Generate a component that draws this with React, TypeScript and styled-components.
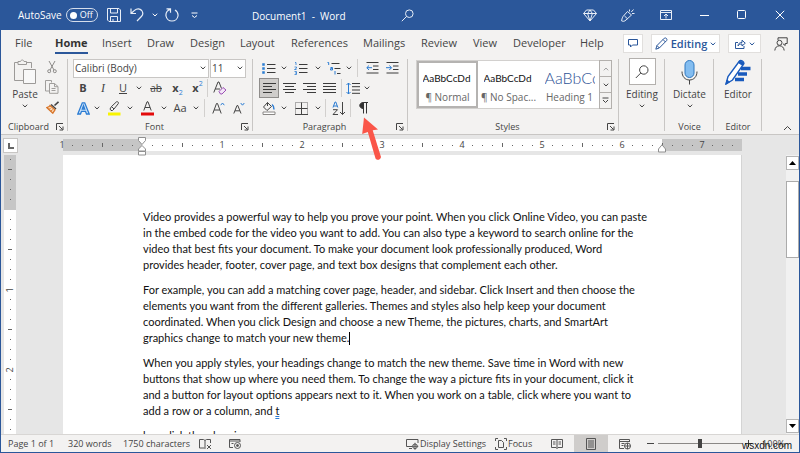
import React from "react";
import styled, { createGlobalStyle, css } from "styled-components";

const ui = '"Open Sans", "Noto Sans", sans-serif';
const blue = "#2b579a";
const ink = "#444444";
const chrome = "#f3f2f1";

const Global = createGlobalStyle`
  *, *::before, *::after { box-sizing: border-box; }
  html, body { margin: 0; height: 100%; overflow: hidden; }
  body { font-family: ${ui}; color: ${ink}; background: ${chrome}; }
  button, select, input { font: inherit; color: inherit; margin: 0; padding: 0; border: 0; background: none; border-radius: 0; }
  svg { display: block; flex: none; }
`;

const Window = styled.div`
  display: flex;
  flex-direction: column;
  height: 100vh;
  border: solid ${blue};
  border-width: 0 1px 1px;
  background: ${chrome};
`;

/* ---------- title bar ---------- */

const TitleBar = styled.header`
  flex: none;
  display: flex;
  align-items: center;
  height: 30px;
  padding-left: 17px;
  background: ${blue};
  color: #ffffff;
  font-size: 10px;
  white-space: nowrap;
`;

const AutoSave = styled.label`
  display: flex;
  align-items: center;
  gap: 4px;
  width: 87px;
  margin-right: 2px;
`;

const Toggle = styled.button`
  display: flex;
  align-items: center;
  justify-content: space-between;
  width: 32px;
  height: 14px;
  padding: 0 4px 0 3px;
  border: 1px solid #d5deec;
  border-radius: 7px;
  font-size: 9px;
  line-height: 12px;
`;

const Knob = styled.span`
  width: 7px;
  height: 7px;
  border-radius: 50%;
  background: #ffffff;
`;

const TitleButton = styled.button<{ $w: number }>`
  display: flex;
  align-items: center;
  justify-content: center;
  width: ${(p) => p.$w}px;
  height: 30px;
`;

const DocTitle = styled.div`
  width: 134px;
  margin-left: 50px;
  padding-top: 2px;
  white-space: pre;
`;

const Spacer = styled.div`
  flex: 1;
`;

/* ---------- tab strip ---------- */

const TabStrip = styled.nav`
  flex: none;
  display: flex;
  align-items: center;
  height: 27px;
  padding: 0 6px 0 14px;
  font-size: 11px;
`;

const Tab = styled.button<{ $active?: boolean; $w: number }>`
  width: ${(p) => p.$w}px;
  height: 24px;
  text-align: left;
  white-space: nowrap;
  ${(p) =>
    p.$active &&
    css`
      font-weight: 700;
      color: #333333;
    `}
`;

const TabText = styled.span<{ $active?: boolean }>`
  display: inline-block;
  height: 21px;
  line-height: 20px;
  border-bottom: 2px solid ${(p) => (p.$active ? blue : "transparent")};
`;

const Pill = styled.button<{ $w: number }>`
  display: flex;
  align-items: center;
  justify-content: center;
  gap: 3px;
  width: ${(p) => p.$w}px;
  height: 19px;
  margin-right: 8px;
  border: 1px solid #e1dfdd;
  background: #ffffff;
  color: ${blue};
  font-weight: 600;
  font-size: 11px;
  white-space: nowrap;
`;

/* ---------- ribbon ---------- */

const Ribbon = styled.section`
  flex: none;
  display: flex;
  height: 78px;
  border-bottom: 1px solid #c8c6c4;
`;

const Group = styled.div<{ $w: number }>`
  position: relative;
  display: flex;
  flex-direction: column;
  flex: none;
  width: ${(p) => p.$w}px;
  padding-top: 1px;
  background: linear-gradient(#c8c6c4, #c8c6c4) right 2px / 1px 72px no-repeat;
`;

const GroupBody = styled.div<{ $pad?: number }>`
  height: 63px;
  padding-left: ${(p) => p.$pad ?? 0}px;
`;

const GroupFoot = styled.div`
  display: flex;
  align-items: center;
  height: 14px;
  font-size: 9px;
  line-height: 14px;
  white-space: nowrap;
`;

const GroupName = styled.span`
  flex: 1;
  min-width: 0;
  text-align: center;
`;

const Launcher = styled.button`
  margin-right: 4px;
`;

const Row = styled.div`
  display: flex;
  align-items: center;
  height: 20px;
`;

const Tool = styled.button<{ $w: number; $on?: boolean }>`
  display: flex;
  align-items: center;
  justify-content: center;
  width: ${(p) => p.$w}px;
  height: ${(p) => (p.$on ? 20 : 18)}px;
  font-size: 11px;
  line-height: 18px;
  ${(p) =>
    p.$on &&
    css`
      background: #cfcdcb;
      border: 1px solid #8f8d8b;
    `}
`;

const Glyph = styled.span<{ $bold?: boolean; $italic?: boolean; $line?: string; $size?: number }>`
  font-weight: ${(p) => (p.$bold ? 700 : 400)};
  font-style: ${(p) => (p.$italic ? "italic" : "normal")};
  font-family: ${(p) => (p.$italic ? '"Liberation Serif", serif' : "inherit")};
  text-decoration: ${(p) => p.$line ?? "none"};
  font-size: ${(p) => p.$size ?? 11}px;
`;

const Script = styled.span<{ $up?: boolean }>`
  align-self: ${(p) => (p.$up ? "flex-start" : "flex-end")};
  font-size: 7px;
  line-height: 9px;
  color: #2b7cd3;
`;

const Sep = styled.span<{ $gap?: number }>`
  width: 1px;
  height: 18px;
  margin: 0 ${(p) => p.$gap ?? 0}px;
  background: #d2d0ce;
`;

const Combo = styled.label<{ $w: number }>`
  display: grid;
  align-items: center;
  width: ${(p) => p.$w}px;
  height: 19px;
  margin-right: 1px;
  border: 1px solid #c8c6c4;
  background: #ffffff;
  > * {
    grid-area: 1 / 1;
  }
  > svg {
    justify-self: end;
    margin-right: 2px;
    pointer-events: none;
  }
`;

const Select = styled.select`
  appearance: none;
  width: 100%;
  height: 17px;
  padding-left: 1px;
  font-size: 10px;
  outline: none;
`;

const ClipRow = styled.div`
  display: flex;
  height: 63px;
  padding-left: 6px;
`;

const BigButton = styled.button<{ $w?: number }>`
  display: flex;
  flex-direction: column;
  align-items: center;
  width: ${(p) => (p.$w ? p.$w + "px" : "100%")};
  height: 56px;
  font-size: 10px;
  line-height: 16px;
  > svg {
    margin-top: 2px;
  }
`;

const BigIcon = styled.span<{ $boxed?: boolean }>`
  display: flex;
  align-items: center;
  justify-content: center;
  width: 27px;
  height: 27px;
  margin-bottom: 1px;
  ${(p) =>
    p.$boxed &&
    css`
      border: 1px solid #b3b0ad;
      background: #ffffff;
    `}
`;

const Stack = styled.div`
  display: flex;
  flex-direction: column;
  gap: 2px;
`;

const Gallery = styled.div`
  display: flex;
  height: 49px;
  margin-top: 2px;
  margin-right: 7px;
  border: 1px solid #d2d0ce;
  background: #ffffff;
`;

const StyleCard = styled.button<{ $on?: boolean }>`
  flex: 1;
  min-width: 0;
  display: flex;
  flex-direction: column;
  align-items: center;
  justify-content: space-between;
  padding: 6px 2px 2px;
  overflow: hidden;
  border: 2px solid ${(p) => (p.$on ? "#b5b3b1" : "transparent")};
  font-size: 10px;
  line-height: 14px;
  white-space: nowrap;
  color: #666666;
`;

const Sample = styled.span<{ $heading?: boolean }>`
  width: 50px;
  overflow: hidden;
  text-align: left;
  font-family: Lato, sans-serif;
  font-size: ${(p) => (p.$heading ? 16 : 10)}px;
  line-height: 18px;
  font-weight: ${(p) => (p.$heading ? 300 : 400)};
  color: ${(p) => (p.$heading ? "#2f5496" : "#111111")};
`;

const Scroller = styled.div`
  display: flex;
  flex-direction: column;
  width: 13px;
  margin: -1px;
`;

const ScrollStep = styled.button`
  flex: 1;
  display: flex;
  align-items: center;
  justify-content: center;
  border: 1px solid #b3b0ad;
  background: ${chrome};
  & + & {
    border-top: 0;
  }
`;

const Collapse = styled.button`
  align-self: flex-end;
  margin: 0 7px 3px auto;
`;

const Pointer = styled.svg`
  position: absolute;
  z-index: 2;
  left: 108px;
  top: 60px;
  pointer-events: none;
`;

/* ---------- workspace ---------- */

const Workspace = styled.main`
  flex: 1;
  min-height: 0;
  display: grid;
  grid-template-columns: 55px minmax(0, 1fr) 13px;
  grid-template-rows: 20px minmax(0, 1fr);
  background: #e6e6e6;
`;

const TabSelector = styled.button`
  width: 15px;
  height: 15px;
  margin: 3px 0 0 2px;
  display: flex;
  align-items: center;
  justify-content: center;
  border: 1px solid #c8c6c4;
  background: #ffffff;
`;

const Ruler = styled.div`
  position: relative;
  grid-column: 2 / 4;
  display: flex;
  width: 686px;
  height: 12px;
  margin-top: 4px;
  padding-left: 1px;
  background: linear-gradient(to right, transparent 7px, #c6c6c6 7px 86px, #ffffff 86px 606px, #c6c6c6 606px);
`;

const Cell = styled.span<{ $vertical?: boolean }>`
  flex: none;
  width: ${(p) => (p.$vertical ? 12 : 10)}px;
  height: ${(p) => (p.$vertical ? 10 : 12)}px;
  display: flex;
  align-items: center;
  justify-content: center;
  font-size: 9px;
  line-height: 12px;
  ${(p) => p.$vertical && "transform: rotate(-90deg);"}
`;

const Tick = styled.i<{ $long?: boolean }>`
  width: 1px;
  height: ${(p) => (p.$long ? 4 : 1)}px;
  background: #666666;
`;

const Indent = styled.svg<{ $x: number; $y: number }>`
  position: absolute;
  left: ${(p) => p.$x}px;
  top: ${(p) => p.$y}px;
`;

const SideRuler = styled.div`
  width: 12px;
  height: 100%;
  margin-left: 3px;
  overflow: hidden;
  background: linear-gradient(#c6c6c6 55px, #ffffff 55px);
`;

const Page = styled.article`
  margin: 0 44px 0 7px;
  padding: 54px 0 0 80px;
  overflow: hidden;
  background: #ffffff;
  border-right: 1px solid #d4d4d4;
  font-family: Lato, sans-serif;
  font-size: 11px;
  line-height: 16px;
  color: #111111;
`;

const Paragraph = styled.p`
  margin: 0 0 9px;
  white-space: nowrap;
`;

const Caret = styled.span`
  display: inline-block;
  width: 1px;
  height: 13px;
  vertical-align: -3px;
  background: #000000;
`;

const Flagged = styled.u`
  text-decoration: underline double #2b7cd3;
`;

const ScrollBar = styled.div`
  display: flex;
  flex-direction: column;
  padding: 1px 0;
  background: #f1f1f1;
`;

const ScrollArrow = styled.button`
  display: flex;
  align-items: center;
  justify-content: center;
  height: 14px;
  border: 1px solid #b5b5b5;
  background: #ffffff;
`;

const Thumb = styled.div`
  height: 77px;
  margin: 11px 0 auto;
  border: 1px solid #ababab;
  background: #ffffff;
`;

/* ---------- status bar ---------- */

const StatusBar = styled.footer`
  position: relative;
  flex: none;
  display: flex;
  align-items: center;
  height: 18px;
  padding: 0 14px 0 7px;
  border-top: 1px solid #d8d6d4;
  font-size: 9px;
  white-space: nowrap;
`;

const StatusButton = styled.button<{ $w: number; $centered?: boolean; $on?: boolean }>`
  display: flex;
  align-items: center;
  justify-content: ${(p) => (p.$centered ? "center" : "flex-start")};
  gap: 1px;
  width: ${(p) => p.$w}px;
  height: 17px;
  background: ${(p) => (p.$on ? "#cfcdcb" : "transparent")};
`;

const Zoom = styled.input`
  appearance: none;
  width: 84px;
  height: 12px;
  background: linear-gradient(#8a8886, #8a8886) center / 100% 1px no-repeat;
  &::-webkit-slider-thumb {
    appearance: none;
    width: 4px;
    height: 9px;
    background: #444444;
  }
`;

const ZoomValue = styled.span`
  width: 31px;
  text-align: right;
`;

const Watermark = styled.span`
  position: absolute;
  right: 7px;
  top: 4px;
  font-family: "Liberation Sans", Arial, sans-serif;
  font-size: 10px;
  line-height: 13px;
  color: #111111;
`;

/* ---------- drawings ---------- */

type IcoProps = { w: number; h: number; c?: string; s?: number; children: React.ReactNode };
const Ico = ({ w, h, c = ink, s = 1, children }: IcoProps) => (
  <svg width={w} height={h} viewBox={`0 0 ${w} ${h}`} fill="none" stroke={c} strokeWidth={s} aria-hidden="true">
    {children}
  </svg>
);

const Chevron = ({ up, c }: { up?: boolean; c?: string }) => (
  <Ico w={6} h={4} c={c}>
    <path d={up ? "M.8 3.300 3 1l2.200 2.300" : "M.8.7 3 3 5.200.7"} />
  </Ico>
);

const Drop = ({ w = 10, name }: { w?: number; name: string }) => (
  <Tool $w={w} aria-label={name}>
    <Chevron />
  </Tool>
);

const LaunchIcon = () => (
  <Ico w={8} h={8}>
    <path d="M.5 7V.5H7M3 3l3.500 3.500M7 3.500V7H3.500" />
  </Ico>
);

const Foot = ({ name, launch }: { name: string; launch?: boolean }) => (
  <GroupFoot>
    <GroupName>{name}</GroupName>
    {launch && (
      <Launcher aria-label={name + " settings"}>
        <LaunchIcon />
      </Launcher>
    )}
  </GroupFoot>
);

const AlignIcon = ({ lines }: { lines: [number, number][] }) => (
  <Ico w={13} h={12} c="#3b3b3b">
    {lines.map(([a, b], i) => (
      <path key={i} d={`M${a} ${1.5 + i * 3}H${b}`} />
    ))}
  </Ico>
);

const RulerCells = ({ count, zero, vertical }: { count: number; zero: number; vertical?: boolean }) => (
  <>
    {Array.from({ length: count }, (_, i) => {
      const d = Math.abs(i - zero);
      return (
        <Cell key={i} $vertical={vertical}>
          {d === 0 ? null : d % 8 === 0 ? d / 8 : <Tick $long={d % 4 === 0} />}
        </Cell>
      );
    })}
  </>
);

/* ---------- content ---------- */

const tabs: [string, number][] = [
  ["File", 40],
  ["Home", 47],
  ["Insert", 45],
  ["Draw", 43],
  ["Design", 50],
  ["Layout", 51],
  ["References", 72],
  ["Mailings", 58],
  ["Review", 52],
  ["View", 40],
  ["Developer", 67],
  ["Help", 30],
];

const paragraphs = [
  [
    "Video provides a powerful way to help you prove your point. When you click Online Video, you can paste",
    "in the embed code for the video you want to add. You can also type a keyword to search online for the",
    "video that best fits your document. To make your document look professionally produced, Word",
    "provides header, footer, cover page, and text box designs that complement each other.",
  ],
  [
    "For example, you can add a matching cover page, header, and sidebar. Click Insert and then choose the",
    "elements you want from the different galleries. Themes and styles also help keep your document",
    "coordinated. When you click Design and choose a new Theme, the pictures, charts, and SmartArt",
    "graphics change to match your new theme.",
  ],
  [
    "When you apply styles, your headings change to match the new theme. Save time in Word with new",
    "buttons that show up where you need them. To change the way a picture fits in your document, click it",
    "and a button for layout options appears next to it. When you work on a table, click where you want to",
    "add a row or a column, and ",
  ],
  ["hen click the plus sign."],
];

export default function App() {
  return (
    <Window>
      <Global />
      <TitleBar>
        <AutoSave>
          AutoSave
          <Toggle role="switch" aria-checked="false">
            <Knob />
            Off
          </Toggle>
        </AutoSave>
        <TitleButton $w={14} aria-label="Save">
          <Ico w={14} h={14} c="#e8eef7">
            <path d="M.5.5h11.500l1.500 1.500v11.500H2L.5 12zM3.500.5v4.500h7V.5M3.500 13.500V8.500h7v5M6 13.500V11" />
          </Ico>
        </TitleButton>
        <TitleButton $w={31} aria-label="Undo">
          <Ico w={14} h={14} c="#e8eef7" s={1.2}>
            <path d="M1 .5v5h5M1.300 5.300 4.500 2.400C7 .2 10 .5 11.700 2.500c1.500 2 1.300 4.300-.3 6L7 13" />
          </Ico>
        </TitleButton>
        <TitleButton $w={6} aria-label="Undo list">
          <Chevron c="#ffffff" />
        </TitleButton>
        <TitleButton $w={28} aria-label="Redo">
          <Ico w={14} h={14} c="#e8eef7" s={1.2}>
            <path d="M1.500.8h4v4M5.300 1.200C2 2.500.6 5 1 8c.6 3 3 5 6 5s5.500-2.300 6-5c.3-2.600-.8-4.700-3-6" />
          </Ico>
        </TitleButton>
        <TitleButton $w={16} aria-label="Customize toolbar">
          <Ico w={7} h={7} c="#ffffff">
            <path d="M.5 1h6M1 3.500l2.500 2L6 3.500" />
          </Ico>
        </TitleButton>
        <DocTitle>Document1  -  Word</DocTitle>
        <TitleButton $w={42} aria-label="Search">
          <Ico w={13} h={13} c="#e8eef7">
            <circle cx="8.300" cy="4.700" r="3.800" />
            <path d="M5.600 7.400.8 12.200" />
          </Ico>
        </TitleButton>
        <Spacer />
        <TitleButton $w={38} aria-label="Premium">
          <Ico w={14} h={13} c="#e8eef7">
            <path d="M3.500 1h7l3 3.500-6.500 7.500L.6 4.500zM.6 4.500h12.900M4.600 4.500 7 12l2.400-7.500L7 1 4.600 4.500" />
          </Ico>
        </TitleButton>
        <TitleButton $w={38} aria-label="Coming soon">
          <Ico w={14} h={14} c="#e8eef7">
            <path d="M6.500 3.500 10.500 7l-5.500 5c-1.500 1.500-3 1.500-4.300 1 0-1.500.3-2.500 1.300-4.500zM3.500 8l3 2.800M8.500 1.500v2M12.500 1.500 10.300 4M11 5.500h2.500" />
          </Ico>
        </TitleButton>
        <TitleButton $w={38} aria-label="Ribbon display options">
          <Ico w={12} h={10} c="#e8eef7">
            <path d="M.5.5h11v9H.5zM.5 2.500h11M6 8.500v-4M4 6l2-2 2 2" />
          </Ico>
        </TitleButton>
        <TitleButton $w={38} aria-label="Minimize">
          <Ico w={9} h={9} c="#ffffff">
            <path d="M0 4.500h9" />
          </Ico>
        </TitleButton>
        <TitleButton $w={38} aria-label="Maximize">
          <Ico w={10} h={10} c="#ffffff">
            <rect x=".5" y=".5" width="8" height="8" rx="1" />
          </Ico>
        </TitleButton>
        <TitleButton $w={38} aria-label="Close">
          <Ico w={10} h={10} c="#ffffff">
            <path d="m.8.8 8.400 8.400M9.200.8.8 9.200" />
          </Ico>
        </TitleButton>
      </TitleBar>

      <TabStrip>
        {tabs.map(([t, w]) => (
          <Tab key={t} $w={w} $active={t === "Home"}>
            <TabText $active={t === "Home"}>{t}</TabText>
          </Tab>
        ))}
        <Spacer />
        <Pill $w={20} aria-label="Comments">
          <Ico w={10} h={9} c={blue}>
            <path d="M.5.5h9v5.500H4.500L2.500 8V6h-2z" />
          </Ico>
        </Pill>
        <Pill $w={69}>
          <Ico w={13} h={13} c={blue}>
            <path d="M.8 12.200 2 8.500 9.300 1.200c1.500-1 3.300.8 2.400 2.300L4.300 11zM8 2.500 10.500 5M2 8.500 4.300 11" />
          </Ico>
          Editing
          <Chevron c={blue} />
        </Pill>
        <Pill $w={33} aria-label="Share">
          <Ico w={11} h={10} c={blue}>
            <path d="M3 3.500H.5v6h8.500V7M3 7c.2-2.500 1.500-3.500 4-3.500V1.200l3.300 3L7 7V5C5 5 4 5.500 3 7z" />
          </Ico>
          <Chevron c={blue} />
        </Pill>
        <TitleButton $w={24} aria-label="Account manager">
          <Ico w={14} h={14}>
            <path d="M4 3V.8h9.200V6.500h-2v2L9 6.800" />
            <circle cx="5.500" cy="5.800" r="2.500" />
            <path d="M.8 13.500c.3-3 2-4.700 4.700-4.700s4.300 1.700 4.700 4.700" />
          </Ico>
        </TitleButton>
      </TabStrip>

      <Ribbon>
        <Group $w={67}>
          <ClipRow>
            <BigButton $w={36}>
              <BigIcon>
                <Ico w={24} h={26} c="#9c9a98">
                  <path d="M5 3.500H1.500v18H11M13 3.500h5.500V9M5 5.500v-3h2.500C8 .5 10.500.5 11 2.500h2.500v3z" />
                  <path d="M10.500 10.500h12v14h-12z" fill="#f8f8f8" />
                </Ico>
              </BigIcon>
              Paste
              <Chevron />
            </BigButton>
            <Stack>
              <Tool $w={18} aria-label="Cut">
                <Ico w={10} h={14} c="#8c8a88">
                  <path d="M2 1l5 9M8 1l-5 9" />
                  <circle cx="2.200" cy="11.200" r="1.500" />
                  <circle cx="7.800" cy="11.200" r="1.500" />
                </Ico>
              </Tool>
              <Tool $w={18} aria-label="Copy">
                <Ico w={14} h={14} c="#a09e9c">
                  <path d="M4.500 11h-4V.5h6v2M4.500 3.500h5l3.500 3v6.800H4.500zM9.500 3.500v3.200H13M6.500 8.500h4M6.500 10.500h4" />
                </Ico>
              </Tool>
              <Tool $w={18} aria-label="Format painter">
                <Ico w={13} h={13}>
                  <path d="M12.500.8 8.500 4.500" strokeWidth="1.600" />
                  <path d="m5 3.500 5 4.500" strokeWidth="1.500" />
                  <path d="M4 4.500C3 6 1.500 6.200.8 6.500l6 5.700L9 8.800z" fill="#fbd9b5" stroke="#d8752a" strokeWidth="1.300" />
                  <path d="M3 8.500 4.500 7M5 10.300 6.500 8.500" stroke="#d8752a" />
                </Ico>
              </Tool>
            </Stack>
          </ClipRow>
          <Foot name="Clipboard" launch />
        </Group>

        <Group $w={185}>
          <GroupBody $pad={5}>
            <Row>
              <Combo $w={136}>
                <Select aria-label="Font" defaultValue="Calibri (Body)">
                  <option>Calibri (Body)</option>
                </Select>
                <Chevron />
              </Combo>
              <Combo $w={36}>
                <Select aria-label="Font size" defaultValue="11">
                  <option>11</option>
                </Select>
                <Chevron />
              </Combo>
            </Row>
            <Row>
              <Tool $w={20} aria-label="Bold"><Glyph $bold>B</Glyph></Tool>
              <Tool $w={20} aria-label="Italic"><Glyph $italic $size={12}>I</Glyph></Tool>
              <Tool $w={20} aria-label="Underline"><Glyph $line="underline">U</Glyph></Tool>
              <Drop name="Underline style" w={12} />
              <Tool $w={22} aria-label="Strikethrough"><Glyph $line="line-through" $size={10}>ab</Glyph></Tool>
              <Tool $w={21} aria-label="Subscript"><Glyph $bold>x</Glyph><Script>2</Script></Tool>
              <Tool $w={19} aria-label="Superscript"><Glyph $bold>x</Glyph><Script $up>2</Script></Tool>
              <Sep />
              <Tool $w={23} aria-label="Clear formatting">
                <Ico w={14} h={14}>
                  <path d="M.8 11.500 5 1h1l2.500 6.500M2.300 8H7" />
                  <path d="m6 10.500 4-4 3 2.500-4 4H7.500z" fill="#f3e6f7" stroke="#9b4fb5" />
                </Ico>
              </Tool>
            </Row>
            <Row>
              <Tool $w={20} aria-label="Text effects">
                <Ico w={13} h={13} c="#2b7cd3" s={1.3}>
                  <path d="M.8 12 5.300.8h2.400L12.200 12H9.500l-1-2.700h-4l-1 2.700zM5.300 7h2.400L6.500 3.700z" fill="#cfe4f8" />
                </Ico>
              </Tool>
              <Drop w={8} name="Text effect list" />
              <Tool $w={26} aria-label="Highlight color">
                <Ico w={14} h={15}>
                  <path d="M1 11.500h12.500v3H1z" fill="#f8f400" stroke="none" />
                  <path d="M4 9.500 3 8l1.500-2.500L9.500.8c1.500-.4 2.300.6 1.800 1.800L7 8 5.500 9.500zM4.500 5.500 7 8" />
                </Ico>
              </Tool>
              <Drop w={6} name="Highlight list" />
              <Tool $w={28} aria-label="Font color">
                <Ico w={13} h={15}>
                  <path d="M0 11.500h13v3H0z" fill="#e30b0b" stroke="none" />
                  <path d="M2.800 9.500 6 .8h1l3.200 8.700M4 6.500h5" />
                </Ico>
              </Tool>
              <Drop w={6} name="Font color list" />
              <Tool $w={26} aria-label="Change case"><Glyph>Aa</Glyph></Tool>
              <Drop w={6} name="Case list" />
              <Sep $gap={5} />
              <Tool $w={16} aria-label="Grow font">
                <Ico w={13} h={12}>
                  <path d="M.8 11.500 4.500 1.500h1l3.700 10M2.200 8h5.600" />
                  <path d="M8.700 3.200 10.500 1l1.800 2.200" stroke="#2b7cd3" />
                </Ico>
              </Tool>
              <Tool $w={26} aria-label="Shrink font">
                <Ico w={12} h={12}>
                  <path d="M.8 11.500 4 3.500h.8l3.200 8M2 8.800h4.800" />
                  <path d="M7.700 1 9.500 3.200 11.300 1" stroke="#2b7cd3" />
                </Ico>
              </Tool>
            </Row>
          </GroupBody>
          <Foot name="Font" launch />
        </Group>

        <Group $w={155}>
          <GroupBody $pad={6}>
            <Row>
              <Tool $w={20} aria-label="Bullets">
                <Ico w={14} h={13} c="#3b3b3b">
                  <path d="M5 2.500h8.500M5 6.500h8.500M5 10.500h8.500" />
                  <path d="M.5 1.500h2v2h-2zM.5 5.500h2v2h-2zM.5 9.500h2v2h-2z" fill="#2b7cd3" stroke="#2b7cd3" strokeWidth=".5" />
                </Ico>
              </Tool>
              <Drop name="Bullet list" />
              <Tool $w={24} aria-label="Numbering">
                <Ico w={14} h={13} c="#3b3b3b">
                  <path d="M5 2.500h8.500M5 6.500h8.500M5 10.500h8.500" />
                  <path d="M1 .5h1V3M.5 5h2v1.200l-2 1.300h2M.5 9.500h2v3h-2M1 11h1.500" stroke="#2b7cd3" strokeWidth=".8" />
                </Ico>
              </Tool>
              <Drop name="Numbering list" />
              <Tool $w={22} aria-label="Multilevel list">
                <Ico w={14} h={13} c="#3b3b3b">
                  <path d="M4.500 1.500h8M7.500 6.500h6M10 11.500h3.500" />
                  <path d="M.5.5h1.200V3M3.500 5.500h2V8h-2V6.700h2M8 9v3.500" stroke="#2b7cd3" />
                </Ico>
              </Tool>
              <Drop w={8} name="Multilevel styles" />
              <Sep $gap={4} />
              <Tool $w={20} aria-label="Decrease indent">
                <Ico w={13} h={12} c="#3b3b3b">
                  <path d="M.5.5h12M7 4h5.500M7 7.500h5.500M.5 11h12" />
                  <path d="M6 5.700H1M3 3.500.8 5.700 3 8" stroke="#2b7cd3" />
                </Ico>
              </Tool>
              <Tool $w={20} aria-label="Increase indent">
                <Ico w={13} h={12} c="#3b3b3b">
                  <path d="M.5.5h12M7 4h5.500M7 7.500h5.500M.5 11h12" />
                  <path d="M0 5.700h5.500M3.300 3.500l2.200 2.200L3.300 8" stroke="#2b7cd3" />
                </Ico>
              </Tool>
            </Row>
            <Row>
              <Tool $w={20} $on aria-label="Align left"><AlignIcon lines={[[0, 13], [0, 9], [0, 13], [0, 9]]} /></Tool>
              <Tool $w={20} aria-label="Center"><AlignIcon lines={[[0, 13], [2, 11], [0, 13], [2, 11]]} /></Tool>
              <Tool $w={20} aria-label="Align right"><AlignIcon lines={[[0, 13], [4, 13], [0, 13], [4, 13]]} /></Tool>
              <Tool $w={20} aria-label="Justify"><AlignIcon lines={[[0, 13], [0, 13], [0, 13], [0, 13]]} /></Tool>
              <Sep $gap={2} />
              <Tool $w={18} aria-label="Line spacing">
                <Ico w={14} h={13} c="#3b3b3b">
                  <path d="M6 1.500h8M6 4.700h8M6 8h8M6 11.300h8" />
                  <path d="M2.500 1v11M.5 3 2.500 1l2 2M.5 10l2 2 2-2" stroke="#2b7cd3" />
                </Ico>
              </Tool>
              <Drop name="Spacing list" />
            </Row>
            <Row>
              <Tool $w={20} aria-label="Shading">
                <Ico w={14} h={14}>
                  <path d="m5.500 1.500 4 4-4.500 4-3.500-3.500zM5.500 1.500V5" />
                  <path d="M10 3.500c1.500 1 2 2.500 2 5" stroke="#2b7cd3" strokeWidth="1.500" />
                  <path d="M1 11h12v2.500H1z" fill="#fff" stroke="#8a8886" />
                </Ico>
              </Tool>
              <Drop name="Shading list" />
              <Tool $w={24} aria-label="Borders">
                <Ico w={13} h={13}>
                  <path d="M.5 12.500V.5h12v12" stroke="#666" strokeDasharray="1 1" />
                  <path d="M6.500.5v12M.5 6.500h12M0 12.500h13" />
                </Ico>
              </Tool>
              <Drop name="Border list" />
              <Sep $gap={2} />
              <Tool $w={22} aria-label="Sort">
                <Ico w={14} h={15}>
                  <path d="M1 6.500 3 1h.8l2 5.500M1.700 5h3.500" stroke="#2b7cd3" />
                  <path d="M1 8.700h4.500L1 13.500h5M10.500 1v12.500M8 11l2.500 2.500L13 11" />
                </Ico>
              </Tool>
              <Sep />
              <Tool $w={24} aria-label="Show formatting marks">
                <Ico w={9} h={12} c="#333333">
                  <path d="M4.500.5H9M4.500.5v11M7.500.5v11" />
                  <path d="M4.500 1v5.500C-.5 6.500-.5.5 4.500.5z" fill="#333333" />
                </Ico>
              </Tool>
            </Row>
          </GroupBody>
          <Foot name="Paragraph" launch />
          <Pointer width="20" height="46" viewBox="0 0 20 46" aria-hidden="true">
            <path d="M3 .5 17 12.500 11.700 13.200 20 40c-.5 3-4 3.800-5.500 1.500L6.800 15 1.200 17z" fill="#fa5649" />
          </Pointer>
        </Group>

        <Group $w={211}>
          <GroupBody $pad={8}>
            <Gallery>
              <StyleCard $on><Sample>AaBbCcDd</Sample>¶ Normal</StyleCard>
              <StyleCard><Sample>AaBbCcDd</Sample>¶ No Spac...</StyleCard>
              <StyleCard><Sample $heading>AaBbCc</Sample>Heading 1</StyleCard>
              <Scroller>
                <ScrollStep aria-label="Previous styles"><Chevron up c="#a0a0a0" /></ScrollStep>
                <ScrollStep aria-label="Next styles"><Chevron /></ScrollStep>
                <ScrollStep aria-label="More styles">
                  <Ico w={7} h={7}><path d="M.5 1h6M1 3l2.500 2.500L6 3" /></Ico>
                </ScrollStep>
              </Scroller>
            </Gallery>
          </GroupBody>
          <Foot name="Styles" launch />
        </Group>

        <Group $w={46}>
          <GroupBody>
            <BigButton>
              <BigIcon $boxed>
                <Ico w={14} h={14}>
                  <circle cx="8.800" cy="5" r="4.200" />
                  <path d="M5.800 8 .8 13" />
                </Ico>
              </BigIcon>
              Editing
              <Chevron />
            </BigButton>
          </GroupBody>
        </Group>

        <Group $w={49}>
          <GroupBody>
            <BigButton>
              <BigIcon>
                <Ico w={17} h={26}>
                  <rect x="4" y="1.500" width="9" height="17" rx="4.500" fill="#83bdf0" stroke="#2f78c0" />
                  <path d="M1 12.500c0 5 3 8.500 7.500 8.500s7.500-3.500 7.500-8.500M8.500 21v4.500" />
                </Ico>
              </BigIcon>
              Dictate
              <Chevron />
            </BigButton>
          </GroupBody>
          <Foot name="Voice" />
        </Group>

        <Group $w={48}>
          <GroupBody>
            <BigButton>
              <BigIcon>
                <Ico w={26} h={26} c="#185abd">
                  <path d="M16 9.500h9.500M13 15h9M10 20.500h9" strokeWidth="3.500" />
                  <path d="M1 25 3 17.500 14.500 2c1.500-1.500 5 .8 4.200 3L7.500 21z" fill="#ffffff" strokeWidth="1.400" />
                  <path d="M13.300 3.500 17.700 6.500 19 4.800 15 1.500zM1 25l1-4 2.500 2z" fill="#185abd" />
                </Ico>
              </BigIcon>
              Editor
            </BigButton>
          </GroupBody>
          <Foot name="Editor" />
        </Group>
        <Collapse aria-label="Collapse ribbon">
          <Ico w={9} h={6}><path d="m1 5 3.500-3.500L8 5" /></Ico>
        </Collapse>
      </Ribbon>

      <Workspace>
        <TabSelector aria-label="Tab stop">
          <Ico w={6} h={6} s={2} c="#666666"><path d="M1 0v5h5" /></Ico>
        </TabSelector>
        <Ruler>
          <RulerCells count={68} zero={8} />
          <Indent $x={81} $y={-2} width="10" height="19" viewBox="0 0 10 19" fill="#fff" stroke="#8f8f8f">
            <path d="M1.500.5h7v3L5 7.500 1.500 3.500zM5 8.500l3.500 3.500v2h-7v-2zM1.500 14.500h7v3.500h-7z" />
          </Indent>
          <Indent $x={601} $y={5} width="10" height="10" viewBox="0 0 10 10" fill="#fff" stroke="#8f8f8f">
            <path d="M5 .8 8.500 5v3h-7V5z" />
          </Indent>
        </Ruler>
        <SideRuler>
          <RulerCells count={28} zero={5} vertical />
        </SideRuler>
        <Page>
          {paragraphs.map((lines, p) => (
            <Paragraph key={p}>
              {lines.map((line, i) => (
                <React.Fragment key={i}>
                  {i > 0 && <br />}
                  {line}
                </React.Fragment>
              ))}
              {p === 1 && <Caret />}
              {p === 2 && <Flagged>t</Flagged>}
            </Paragraph>
          ))}
        </Page>
        <ScrollBar>
          <ScrollArrow aria-label="Scroll up">
            <Ico w={7} h={4}><path d="M0 4 3.500 0 7 4z" fill="#000" stroke="none" /></Ico>
          </ScrollArrow>
          <Thumb />
          <ScrollArrow aria-label="Scroll down">
            <Ico w={7} h={4}><path d="M0 0 3.500 4 7 0z" fill="#000" stroke="none" /></Ico>
          </ScrollArrow>
        </ScrollBar>
      </Workspace>

      <StatusBar>
        <StatusButton $w={60}>Page 1 of 1</StatusButton>
        <StatusButton $w={55}>320 words</StatusButton>
        <StatusButton $w={76}>1750 characters</StatusButton>
        <StatusButton $w={30} aria-label="Proofing">
          <Ico w={13} h={12} c="#555">
            <path d="M6 10.500 5.500 10H.5V1.500h4L6 2.500l1.500-1h4V5M6 2.500v8M8 7l4 4M12 7l-4 4" />
          </Ico>
        </StatusButton>
        <StatusButton $w={30} aria-label="Macro recording">
          <Ico w={13} h={12} c="#555">
            <path d="M4 9.500H.5v-8H11V4M.5 3H11M2.500 5.500h2" />
            <circle cx="8.500" cy="7.500" r="3" />
            <circle cx="8.500" cy="7.500" r="1" fill="#555" />
          </Ico>
        </StatusButton>
        <Spacer />
        <StatusButton $w={89}>
          <Ico w={13} h={12} c="#555">
            <path d="M6 8.500H.5v-7H12V5M3 10.500h3" />
            <circle cx="9" cy="8.300" r="2.300" />
            <path d="M9 4.800v7M5.800 8.300h6.500" />
          </Ico>
          Display Settings
        </StatusButton>
        <StatusButton $w={45}>
          <Ico w={12} h={12} c="#555">
            <path d="M.5 3V.5H3M9 .5h2.500V3M.5 9v2.500H3M9 11.500h2.500V9M3.500 2.500h3l2 2v5h-5z" />
          </Ico>
          Focus
        </StatusButton>
        <StatusButton $w={34} $centered aria-label="Read mode">
          <Ico w={12} h={11} c="#555">
            <path d="M6 10.500V1.500H.5v8H5l1 1 1-1h4.500v-8H6M2 4h2.500M2 6h2.500M7.500 4H10M7.500 6H10" />
          </Ico>
        </StatusButton>
        <StatusButton $w={34} $centered $on aria-label="Print layout">
          <Ico w={10} h={12} c="#555">
            <path d="M.5.5h9v11h-9zM2 3h6M2 5h6M2 7h6M2 9h6" />
          </Ico>
        </StatusButton>
        <StatusButton $w={34} $centered aria-label="Web layout">
          <Ico w={12} h={12} c="#555">
            <path d="M5 10.500H.5v-9h10V4M.5 3.500h10M2.500 5.500h3M2.500 7.500h2" />
            <circle cx="8.500" cy="8" r="3" />
            <path d="M5.500 8h6M8.500 5v6" />
          </Ico>
        </StatusButton>
        <StatusButton $w={16} $centered aria-label="Zoom out">
          <Ico w={7} h={7}><path d="M0 3.500h7" /></Ico>
        </StatusButton>
        <Zoom type="range" aria-label="Zoom" min={0} max={100} defaultValue={50} />
        <StatusButton $w={12} $centered aria-label="Zoom in">
          <Ico w={7} h={7}><path d="M0 3.500h7M3.500 0v7" /></Ico>
        </StatusButton>
        <ZoomValue>100%</ZoomValue>
        <Watermark>wsxdn.com</Watermark>
      </StatusBar>
    </Window>
  );
}
